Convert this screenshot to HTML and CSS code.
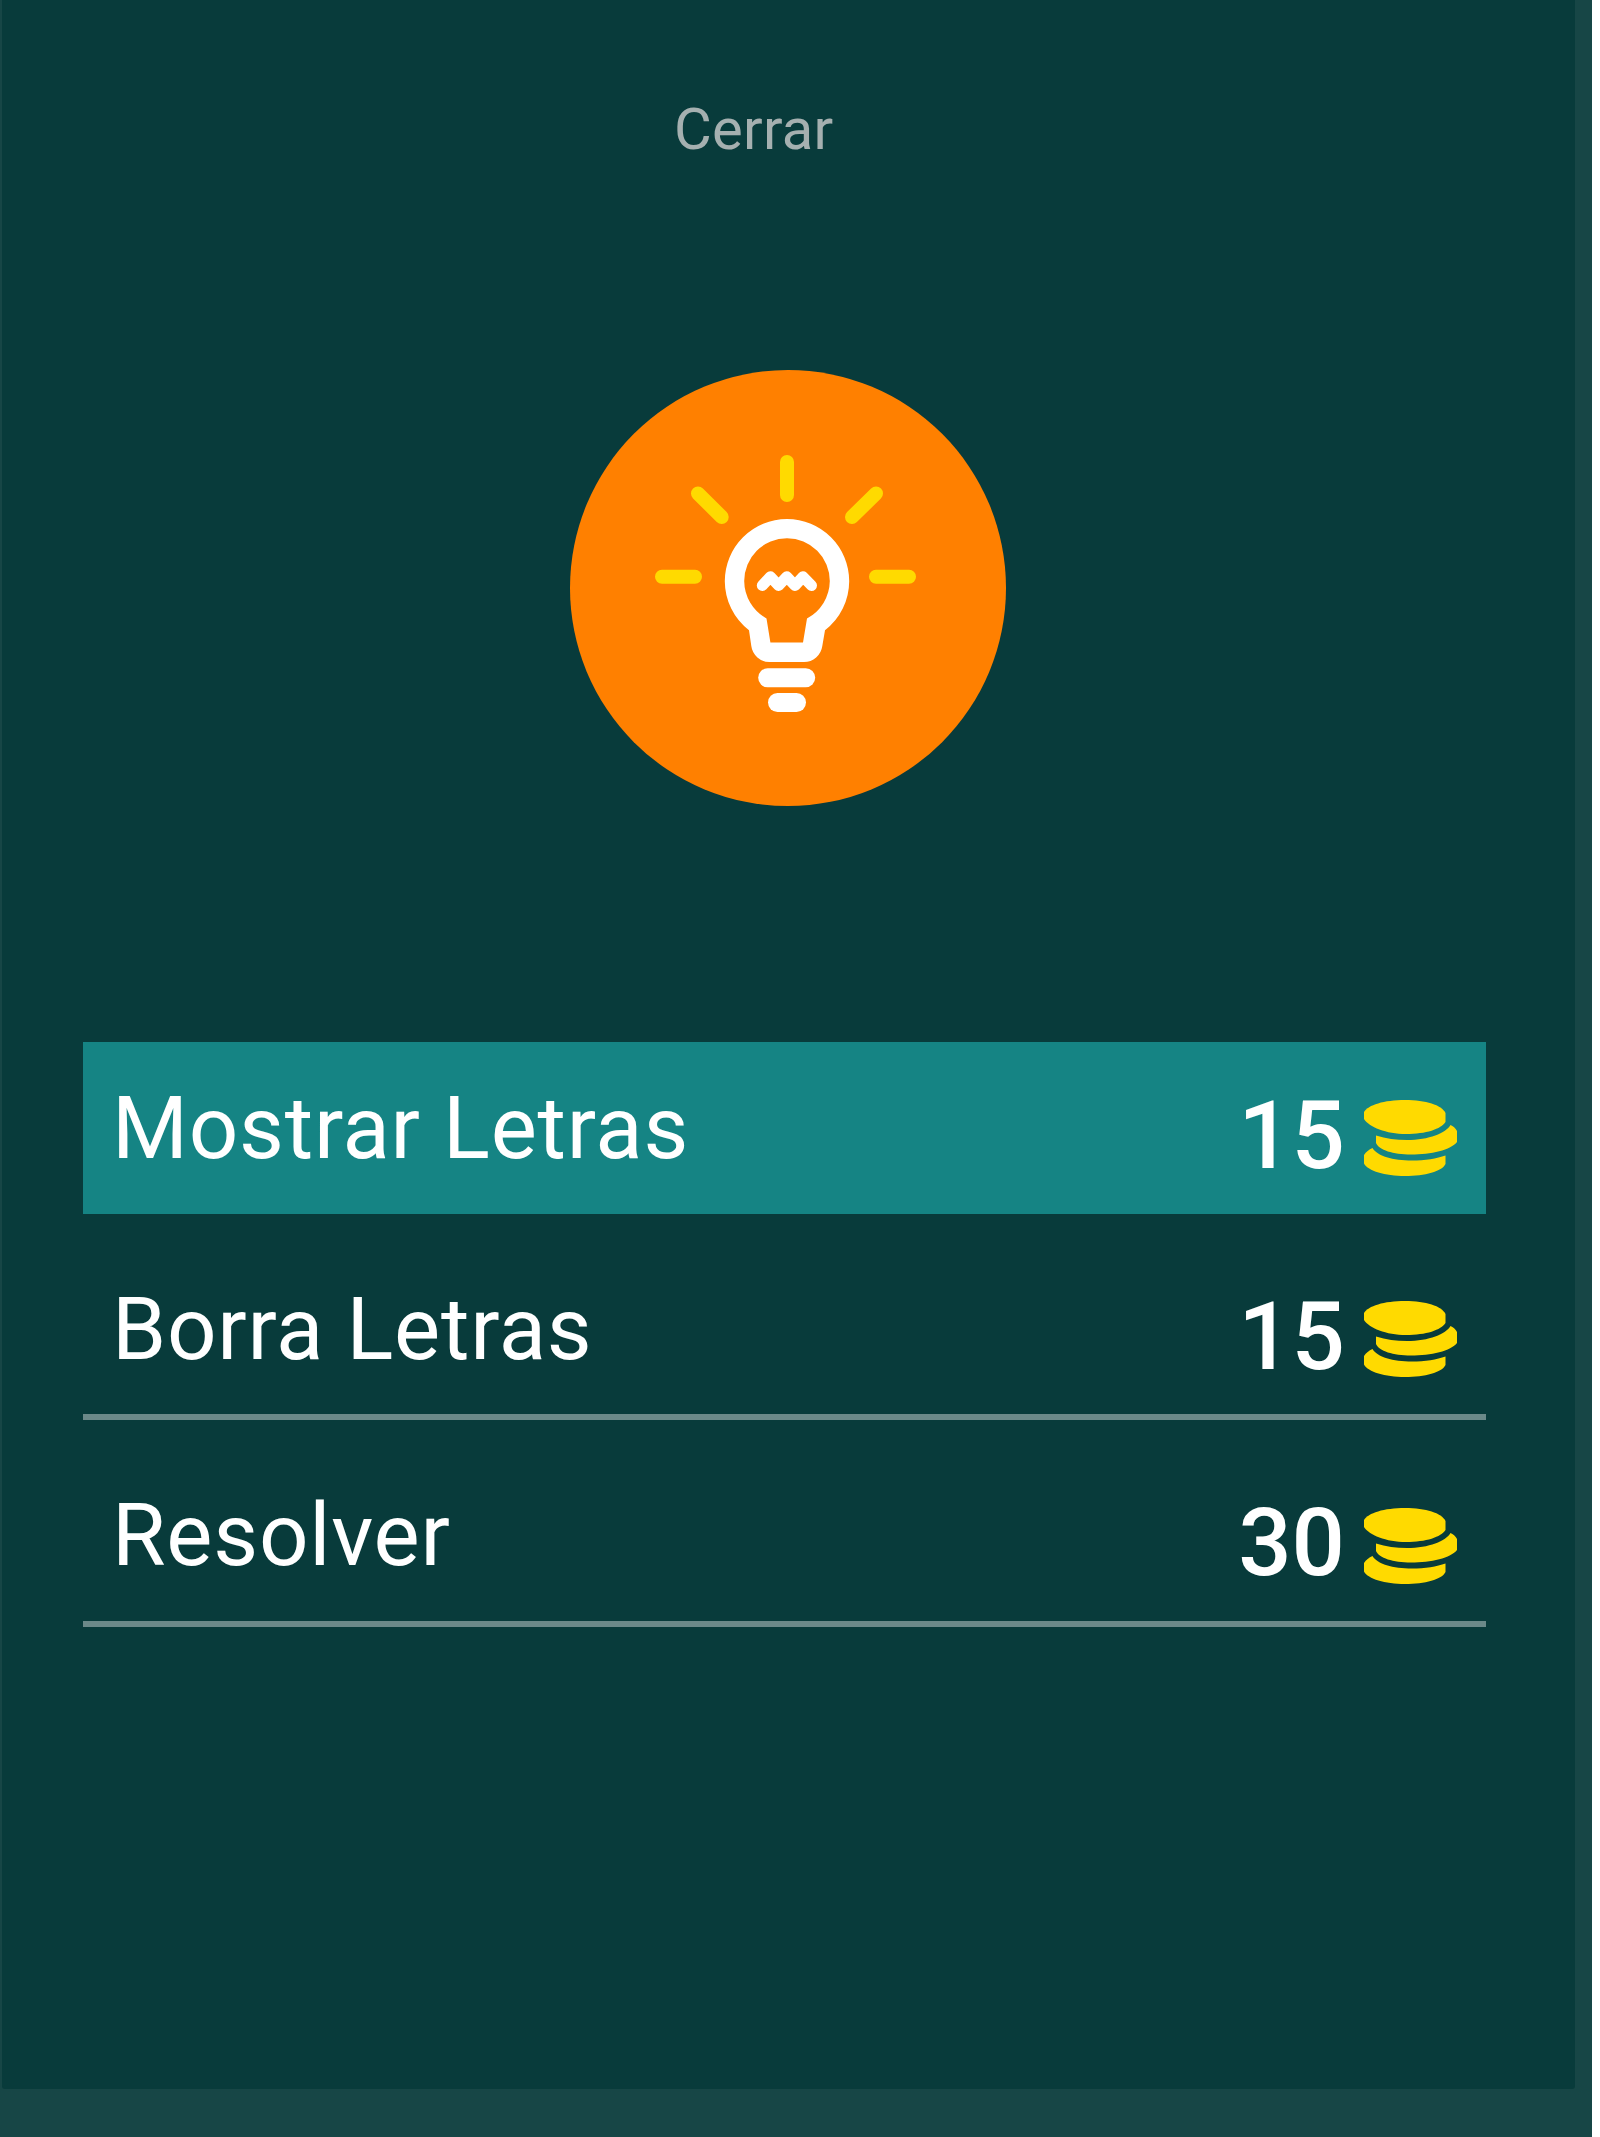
FILE: index.html
```html
<!DOCTYPE html>
<html lang="es">
<head>
<meta charset="utf-8">
<title>Pistas</title>
<link rel="stylesheet" href="styles.css">
</head>
<body>
<svg class="defs" width="0" height="0" aria-hidden="true">
  <symbol id="coins" viewBox="0 0 93 76">
    <path d="M0 12C4 5 20 0 41 0S77.500 5 81.500 13V22C77 29 62 34 42 34C22 34 5 27 0 19Z"/>
    <path d="M12 35.500C22 38.500 32 40 43 40C65 40 82 33 86.500 25C89 26 91.500 28 93 31V42C87 50 67 54.500 47 54.500C29 54.500 15 50 12 43Z"/>
    <path d="M8.500 48C13 56 29 60.500 48 60.500C61 60.500 73 58.500 81.500 55.500V64C78 71.500 61 76 41 76S4 71 0 63.500V55C2 52 5 49.500 8.500 48Z"/>
  </symbol>
</svg>
<main class="page">
  <section class="modal">
    <button class="close">Cerrar</button>
    <svg class="badge" viewBox="570 370 436 436">
      <circle class="disc" cx="788" cy="588" r="218"/>
      <path class="rays" d="M787 462V495M698 493.500L721.700 517M876 493.500L852 517M662 576.800H695M876 576.800H909"/>
      <path class="bulb" d="M787 519A62.200 62.200 0 0 1 849.200 581.200A62.200 62.200 0 0 1 825 630.200L822.300 646A18.500 18.500 0 0 1 804 662H769.500A18.500 18.500 0 0 1 751.300 646L749 630.200A62.200 62.200 0 0 1 724.800 581.200A62.200 62.200 0 0 1 787 519ZM787 538.300A42.800 42.800 0 0 0 744.200 581.100A42.800 42.800 0 0 0 766.500 618.400L770.400 642.500H803L807 618.400A42.800 42.800 0 0 0 829.800 581.100A42.800 42.800 0 0 0 787 538.300Z"/>
      <path class="filament" d="M762.300 585.500L770.400 576.700L778.600 585.500L786.800 576.700L795 585.500L803 576.700L811.500 585.500"/>
      <rect class="bulb" x="758.200" y="668.300" width="57" height="19" rx="9.500"/>
      <rect class="bulb" x="768" y="693" width="38" height="19" rx="9.500"/>
    </svg>
    <ul class="options">
      <li class="option option--active">
        <span class="label">Mostrar Letras</span>
        <span class="price">15</span>
        <svg class="coins"><use href="#coins"/></svg>
      </li>
      <li class="option">
        <span class="label">Borra Letras</span>
        <span class="price">15</span>
        <svg class="coins"><use href="#coins"/></svg>
      </li>
      <li class="option option--last">
        <span class="label">Resolver</span>
        <span class="price">30</span>
        <svg class="coins"><use href="#coins"/></svg>
      </li>
    </ul>
  </section>
</main>
</body>
</html>
```
FILE: styles.css
```css
* { box-sizing: border-box; }

body {
  margin: 0;
  background: #fff;
  font-family: Roboto, sans-serif;
}

.defs { display: block; }

.page {
  width: 1592px;
  height: 2137px;
  padding-left: 2px;
  background: #174646;
}

.modal {
  display: flex;
  flex-direction: column;
  width: 1573px;
  height: 2089px;
  padding: 95px 89px 0 81px;
  border-radius: 0 0 3px 3px;
  background: #083b3b;
}

.close {
  align-self: flex-start;
  margin: 0 0 0 591px;
  padding: 0;
  border: 0;
  background: none;
  color: #a5b0b0;
  font: 400 58px/68px Roboto, sans-serif;
  letter-spacing: 0.25px;
}

.badge {
  width: 436px;
  height: 436px;
  margin: 207px 0 0 487px;
}

.disc { fill: #ff8000; }

.rays {
  fill: none;
  stroke: #ffda00;
  stroke-width: 14;
  stroke-linecap: round;
}

.bulb { fill: #fff; }

.filament {
  fill: none;
  stroke: #fff;
  stroke-width: 11;
  stroke-linecap: round;
  stroke-linejoin: round;
}

.options {
  margin: 236px 0 0;
  padding: 0;
  list-style: none;
}

.option {
  display: flex;
  align-items: flex-start;
  height: 177px;
  margin-bottom: 29px;
  padding: 0 29px 0 29px;
  border-bottom: 6px solid #6b8989;
  color: #fff;
}

.option--active {
  height: 172px;
  border-bottom: 0;
  background: #158484;
}

.option--last { height: 178px; }

.label {
  flex: 1;
  font-size: 87px;
  line-height: 172px;
  letter-spacing: 0.75px;
}

.price {
  margin-top: 8px;
  margin-right: 19px;
  font-size: 94px;
  font-weight: 500;
  line-height: 172px;
}

.coins {
  width: 93px;
  height: 76px;
  margin-top: 58px;
  fill: #ffda00;
}

.option--last .coins { margin-top: 59px; }
```
